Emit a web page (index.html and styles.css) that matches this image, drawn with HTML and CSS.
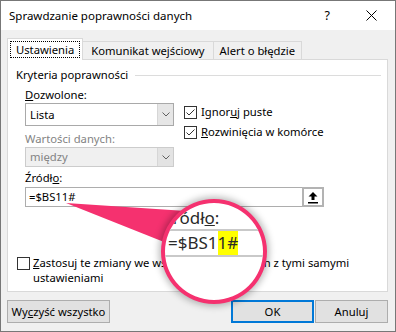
FILE: index.html
```html
<!DOCTYPE html>
<html lang="pl">

<head>
    <meta charset="UTF-8">
    <meta name="viewport" content="width=device-width, initial-scale=1.0">
    <title>Sprawdzanie poprawności danych</title>
    <link rel="stylesheet" href="styles.css">
</head>

<body>
    <div class="window">
        <div class="titlebar">
            <span class="title">Sprawdzanie poprawności danych</span>
            <span class="help">?</span>
            <svg class="close" width="11" height="11" viewBox="0 0 11 11">
                <path d="M0.5 0.5 L10.5 10.5 M10.5 0.5 L0.5 10.5" stroke="#000" stroke-width="1" fill="none" />
            </svg>
        </div>

        <div class="main">
            <div class="tabs">
                <div class="tab active"><span class="focus">Ustawienia</span></div>
                <div class="tab">Komunikat wejściowy</div>
                <div class="tab">Alert o błędzie</div>
            </div>

            <div class="pane">
                <div class="group-title"><span>Kryteria poprawności</span></div>

                <div class="criteria">
                    <div class="col">
                        <div class="label"><u>D</u>ozwolone:</div>
                        <div class="combo">
                            <span class="value">Lista</span>
                            <span class="drop">
                                <svg width="8" height="5" viewBox="0 0 8 5">
                                    <path d="M0.5 0.5 L4 4 L7.5 0.5" stroke="#606060" fill="none" />
                                </svg>
                            </span>
                        </div>
                        <div class="label disabled">Wartości danych:</div>
                        <div class="combo disabled short">
                            <span class="value">między</span>
                            <span class="drop">
                                <svg width="8" height="5" viewBox="0 0 8 5">
                                    <path d="M0.5 0.5 L4 4 L7.5 0.5" stroke="#606060" fill="none" />
                                </svg>
                            </span>
                        </div>
                    </div>

                    <div class="checks">
                        <div class="check">
                            <span class="box">
                                <svg width="11" height="11" viewBox="0 0 11 11">
                                    <path d="M1.5 5.5 L4 8 L9.5 2.5" stroke="#333" fill="none" />
                                </svg>
                            </span>
                            <span>Ignor<u>u</u>j puste</span>
                        </div>
                        <div class="check">
                            <span class="box">
                                <svg width="11" height="11" viewBox="0 0 11 11">
                                    <path d="M1.5 5.5 L4 8 L9.5 2.5" stroke="#333" fill="none" />
                                </svg>
                            </span>
                            <span><u>R</u>ozwinięcia w komórce</span>
                        </div>
                    </div>
                </div>

                <div class="label source-label">Źródł<u>o</u>:</div>
                <div class="source">
                    <span class="value">=$BS11#</span>
                    <span class="ref-btn">
                        <svg width="12" height="13" viewBox="0 0 12 13">
                            <path d="M6 1 L10.5 5.5 L7.5 5.5 L7.5 9 L4.5 9 L4.5 5.5 L1.5 5.5 Z" fill="#000" />
                            <rect x="1" y="11" width="10" height="1.5" fill="#000" />
                        </svg>
                    </span>
                </div>

                <div class="apply">
                    <span class="box"></span>
                    <span class="apply-text"><u>Z</u>astosuj te zmiany we wszystkich komórkach z tymi samymi ustawieniami</span>
                </div>
            </div>

            <div class="footer">
                <button class="btn clear">Wy<u>c</u>zyść wszystko</button>
                <div class="spacer"></div>
                <button class="btn ok">OK</button>
                <button class="btn cancel">Anuluj</button>
            </div>
        </div>

        <!-- lupa z podświetleniem -->
        <svg class="pointer" width="396" height="332" viewBox="0 0 396 332">
            <polygon points="66,203 186,211 164,242" fill="#f5316f" />
        </svg>
        <div class="magnifier">
            <div class="zoom-label">Źródł<u>o</u>:</div>
            <div class="zoom-field">=$BS1<span class="mark">1#</span></div>
        </div>
    </div>
</body>

</html>
```

FILE: styles.css
```css
body {
    margin: 0;
    font-family: 'Noto Sans', sans-serif;
    font-size: 11.25px;
    color: #000;
}

.window {
    position: relative;
    width: 396px;
    height: 332px;
    box-sizing: border-box;
    border: 1px solid #777;
    display: flex;
    flex-direction: column;
    overflow: hidden;
}

.titlebar {
    height: 29px;
    background-color: #fff;
    display: flex;
    align-items: center;
    padding-left: 8px;
}

.title {
    flex: 1;
    font-size: 11.5px;
}

.help {
    font-size: 12.5px;
    margin-right: 36px;
}

.close {
    margin-right: 18px;
}

.main {
    flex: 1;
    background-color: #f0f0f0;
    padding: 8px 7px 0 6px;
}

/* zakładki */
.tabs {
    display: flex;
    align-items: flex-end;
    height: 21px;
}

.tab {
    height: 18px;
    box-sizing: border-box;
    border: 1px solid #d9d9d9;
    border-bottom: none;
    padding: 0 8px;
    line-height: 17px;
    margin-left: -1px;
}

.tab:last-child {
    padding: 0 6px;
}

.tab.active {
    height: 22px;
    margin-left: 0;
    margin-bottom: -1px;
    background-color: #fff;
    padding: 2px 2px 0;
    position: relative;
}

.focus {
    display: block;
    outline: 1px dotted #000;
    outline-offset: -1px;
    padding: 0 6px;
    line-height: 17px;
}

.pane {
    height: 233px;
    box-sizing: border-box;
    border: 1px solid #d9d9d9;
    background-color: #fff;
    padding: 7px 6px 0 8px;
}

.group-title {
    display: flex;
    align-items: center;
    line-height: 16px;
}

.group-title::after {
    content: "";
    flex: 1;
    border-top: 1px solid #dcdcdc;
    margin-left: 7px;
}

.criteria {
    display: flex;
    margin-top: 4px;
    padding-left: 9px;
}

.col {
    width: 149px;
}

.label {
    line-height: 16px;
}

.label.disabled {
    color: #838383;
    margin-top: 5px;
}

.combo {
    height: 23px;
    box-sizing: border-box;
    border: 1px solid #a9a9a9;
    display: flex;
    align-items: stretch;
    background-color: #fff;
}

.combo .value {
    flex: 1;
    padding-left: 4px;
    line-height: 21px;
}

.combo .drop {
    width: 15px;
    background-color: #e6e6e6;
    border-left: 1px solid #d6d6d6;
    display: flex;
    align-items: center;
    justify-content: center;
}

.combo.short {
    height: 20px;
}

.combo.short .value {
    line-height: 18px;
}

.combo.disabled {
    background-color: #f0f0f0;
    border-color: #cccccc;
    color: #838383;
}

.combo.disabled .drop {
    background-color: #e3e3e3;
}

.checks {
    margin-left: 10px;
    padding-top: 17px;
    display: flex;
    flex-direction: column;
    gap: 4px;
}

.check {
    display: flex;
    align-items: center;
    gap: 4px;
    line-height: 16px;
}

.box {
    width: 13px;
    height: 13px;
    box-sizing: border-box;
    border: 1px solid #333;
    background-color: #fff;
    display: flex;
    align-items: center;
    justify-content: center;
    flex-shrink: 0;
}

.source-label {
    margin-top: 3px;
    padding-left: 9px;
}

.source {
    margin: 1px 0 0 9px;
    width: 299px;
    height: 20px;
    box-sizing: border-box;
    border: 1px solid #adadad;
    display: flex;
}

.source .value {
    flex: 1;
    padding-left: 3px;
    line-height: 18px;
}

.ref-btn {
    width: 22px;
    margin: -1px -1px -1px 0;
    box-sizing: border-box;
    border: 2px solid #b3b3b3;
    background-color: #fff;
    display: flex;
    align-items: center;
    justify-content: center;
}

.apply {
    display: flex;
    gap: 3px;
    margin: 48px 0 0 1px;
    line-height: 15px;
}

.apply .box {
    margin-top: 2px;
}

.apply-text {
    width: 320px;
}

/* przyciski */
.footer {
    display: flex;
    margin-top: 8px;
}

.spacer {
    flex: 1;
}

.btn {
    height: 23px;
    font-family: inherit;
    font-size: 11.25px;
    color: #000;
    background-color: #e1e1e1;
    border: 1px solid #adadad;
    padding: 0;
}

.btn.clear {
    width: 103px;
}

.btn.ok {
    width: 83px;
    border: 2px solid #0078d7;
    margin-right: 1px;
}

.btn.cancel {
    width: 73px;
}

/* lupa */
.pointer {
    position: absolute;
    left: -1px;
    top: -1px;
    pointer-events: none;
}

.magnifier {
    position: absolute;
    left: 160px;
    top: 198px;
    width: 106px;
    height: 105px;
    box-sizing: border-box;
    border: 4px solid #f5316f;
    border-radius: 50%;
    background-color: #fff;
    overflow: hidden;
    box-shadow: 0 0 7px 2px rgba(0, 0, 0, 0.28);
    color: #2a2a2a;
}

.zoom-label {
    font-size: 17px;
    line-height: 22px;
    margin: 4px 0 0 -2px;
    white-space: nowrap;
}

.zoom-field {
    width: 160px;
    height: 28px;
    box-sizing: border-box;
    margin-top: 0;
    border-top: 2px solid #c9c9c9;
    border-bottom: 2px solid #c9c9c9;
    font-size: 17px;
    line-height: 24px;
    padding-left: 3px;
    white-space: nowrap;
}

.mark {
    display: inline-block;
    background-color: #ffff00;
}
```
